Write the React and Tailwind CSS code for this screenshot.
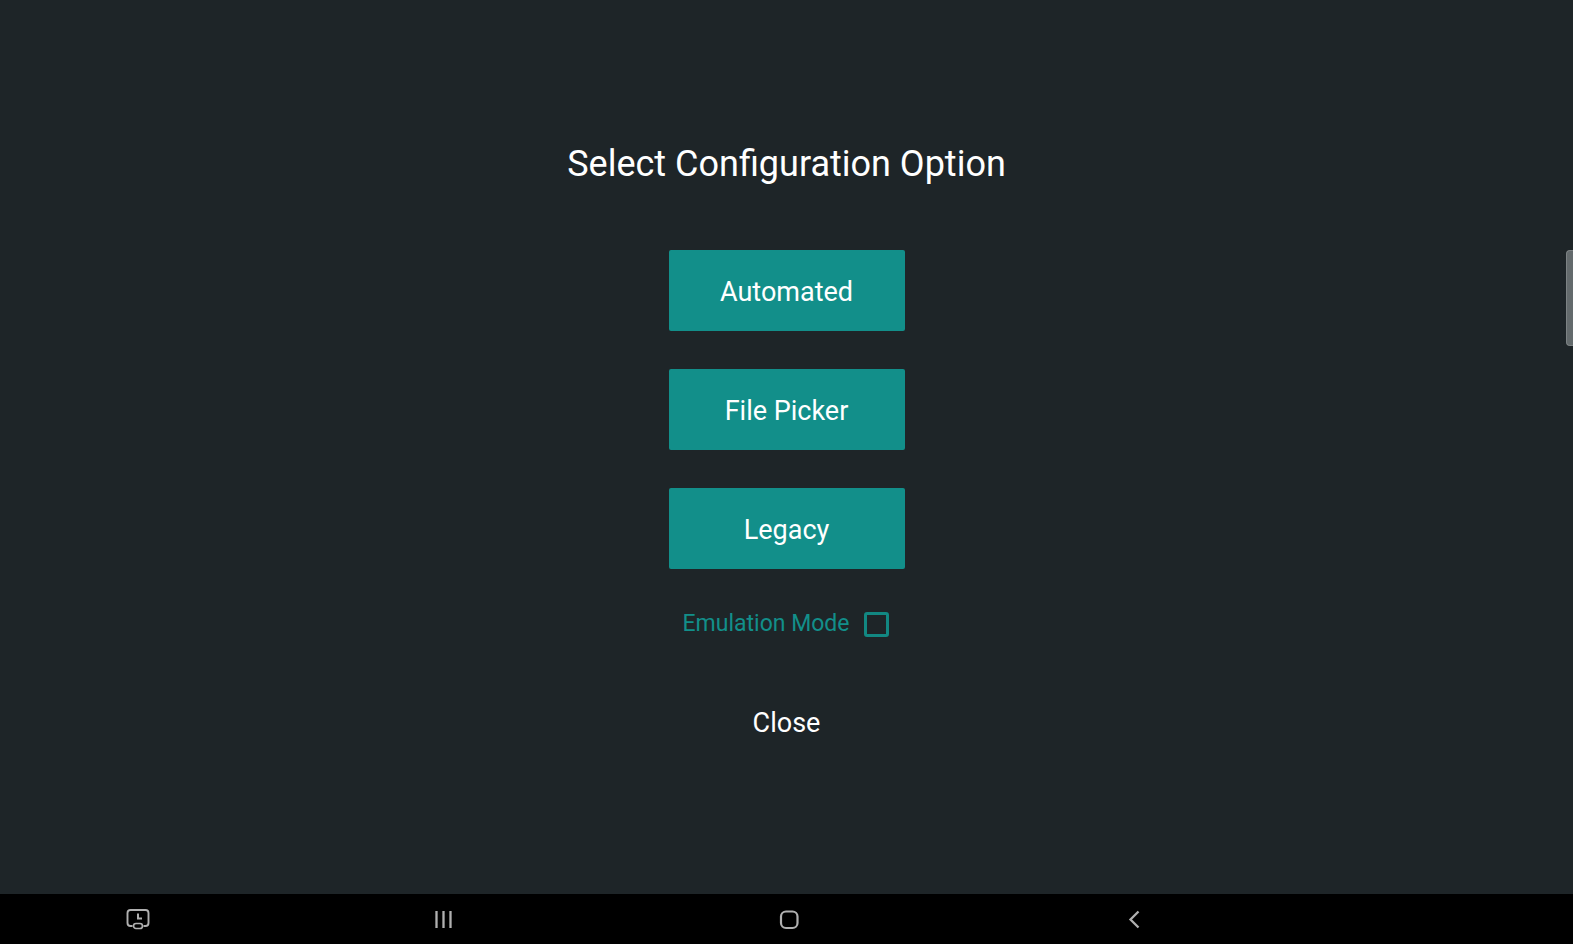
const options = ["Automated", "File Picker", "Legacy"];

const NavButton = ({ label, children }) => {
   return (
      <button type="button" aria-label={label} className="flex items-center justify-center text-[#b0b0b0]">
         <svg width="24" height="24" viewBox="0 0 24 24" fill="none" stroke="currentColor" strokeWidth="2">
            {children}
         </svg>
      </button>
   )
}

const NavBar = () => {
   return (
      <nav className="h-[50px] shrink-0 bg-black pl-[5px] grid grid-cols-[17fr_22fr_22fr_22fr_17fr]">
         <NavButton label="Recent task">
            <path d="M6.5 19H4.5Q1.5 19 1.5 16V6Q1.5 3 4.5 3H19.5Q22.5 3 22.5 6V16Q22.5 19 19.5 19H17.5" strokeWidth="1.9" />
            <path d="M12 6.5V11.5H16" />
            <rect x="7.5" y="16.5" width="9" height="5" rx="2.5" strokeWidth="1.7" />
         </NavButton>
         <NavButton label="Recents">
            <path d="M4.5 4V21M11.5 4V21M18.5 4V21" strokeWidth="2.3" />
         </NavButton>
         <NavButton label="Home">
            <rect x="4" y="4.5" width="16.5" height="16.5" rx="5" strokeWidth="2.2" />
         </NavButton>
         <NavButton label="Back">
            <path d="M16.5 4.5L8.5 12.5L16.5 20.5" strokeWidth="2.3" />
         </NavButton>
      </nav>
   )
}

const App = () => {
   return (
      <div className="relative flex flex-col min-h-screen overflow-hidden bg-[#1e2528] font-[Roboto,sans-serif] text-white">
         <main className="flex-1 flex flex-col items-center justify-center pb-2">
            <h1 className="text-4xl leading-12">Select Configuration Option</h1>
            <div className="flex flex-col gap-[38px] mt-[62px]">
               {options.map((option) => (
                  <button key={option} type="button" className="w-[236px] h-[81px] pt-1 rounded-xs bg-[#128f8a] text-[27px] leading-8">
                     {option}
                  </button>
               ))}
            </div>
            <label className="flex items-center gap-3.5 h-8 pr-0.5 mt-10 text-[23px] text-[#128f8a]">
               Emulation Mode
               <input type="checkbox" className="appearance-none size-[25px] rounded-[3px] border-3 border-[#128882] checked:bg-[#128f8a]" />
            </label>
            <button type="button" className="h-12 px-6 mt-[58px] text-[27px] leading-8">Close</button>
         </main>
         {/* edge panel handle */}
         <div className="absolute right-0 top-[250px] w-[7px] h-24 rounded-l-sm bg-[#636a6c] border-l border-y border-[#7c8284]" />
         <NavBar />
      </div>
   )
}

export default App
